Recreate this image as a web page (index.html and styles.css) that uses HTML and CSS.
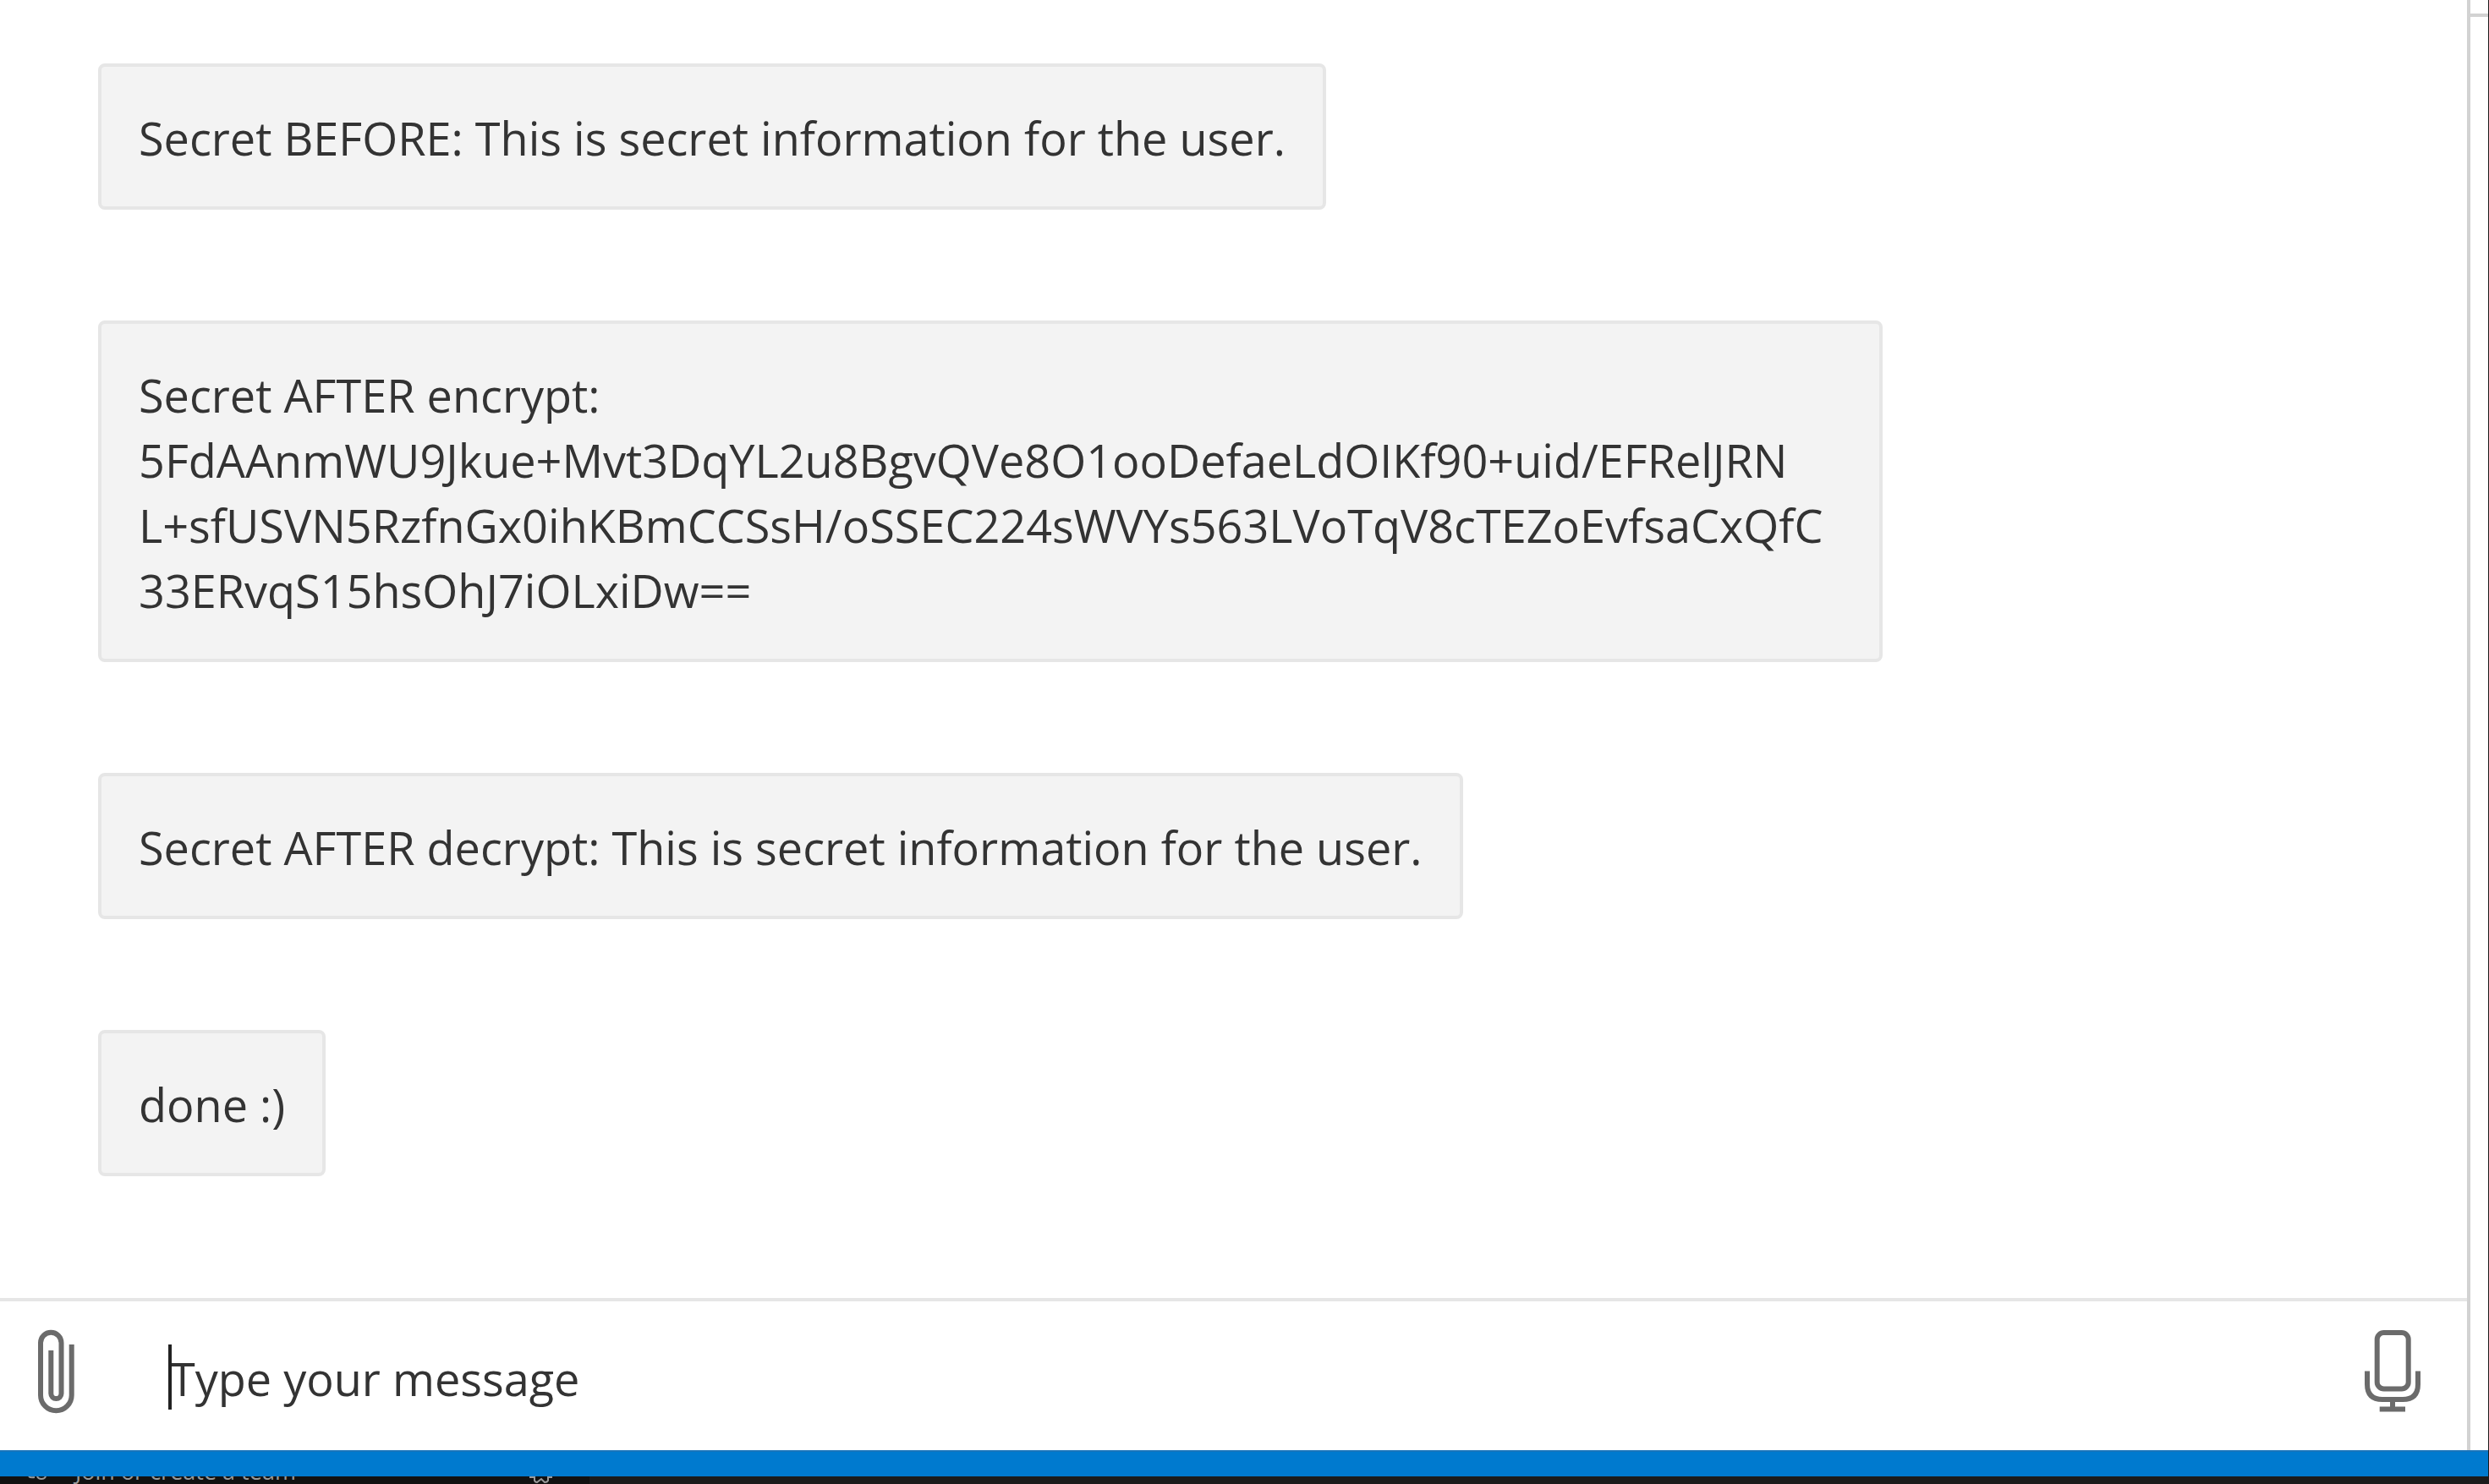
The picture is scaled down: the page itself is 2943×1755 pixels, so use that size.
FILE: index.html
```html
<!DOCTYPE html>
<html lang="en">
<head>
<meta charset="utf-8">
<title>Chat</title>
<link rel="stylesheet" href="styles.css">
</head>
<body>
<div class="app">
  <div class="workspace">
    <main class="chat">
      <section class="messages" aria-label="Messages">
        <p class="bubble">Secret BEFORE: This is secret information for the user.</p>
        <p class="bubble bubble-long">Secret AFTER encrypt:<br>5FdAAnmWU9Jkue+Mvt3DqYL2u8BgvQVe8O1ooDefaeLdOIKf90+uid/EFRelJRN<br>L+sfUSVN5RzfnGx0ihKBmCCSsH/oSSEC224sWVYs563LVoTqV8cTEZoEvfsaCxQfC<br>33ERvqS15hsOhJ7iOLxiDw==</p>
        <p class="bubble">Secret AFTER decrypt: This is secret information for the user.</p>
        <p class="bubble">done :)</p>
      </section>
      <form class="composer">
        <button class="icon-button" type="button" aria-label="Attach file">
          <svg class="icon" width="52" height="104" viewBox="0 0 52 104"><path d="M44.7 19V79A18.3 18.3 0 0 1 8 79V17A12.2 12.2 0 0 1 32.5 17V77A6.1 6.1 0 0 1 20.3 77V26"/></svg>
        </button>
        <div class="field">
          <input class="message-input" type="text" aria-label="Message" placeholder="Type your message">
          <span class="caret"></span>
        </div>
        <button class="icon-button" type="button" aria-label="Speak">
          <svg class="icon" width="76" height="104" viewBox="0 0 76 104"><rect x="19.7" y="5" width="37" height="66.5" rx="8"/><path d="M8 50.5V66Q8 84 26 84H50Q68 84 68 66V50.5M38 84V95M22.7 95.5H53"/></svg>
        </button>
      </form>
    </main>
    <aside class="side"><div class="side-head"></div></aside>
  </div>
  <div class="status"></div>
  <footer class="dock">
    <div class="team">
      <svg class="people" width="24" height="9" viewBox="0 0 24 9"><path d="M1 0Q3 2 8 1"/><path d="M11 0Q12 3 16 3Q20 3 21 0"/></svg>
      <a class="team-link" href="#">Join or create a team</a>
      <svg class="gear" width="28" height="9" viewBox="0 0 28 9"><path d="M0 1H6V5Q7 7 9 7L14 3L18 7Q21 7 22 5V1H27"/></svg>
    </div>
  </footer>
</div>
</body>
</html>
```
FILE: styles.css
```css
* { box-sizing: border-box; }

body {
  margin: 0;
  background: #1b1b1b;
  color: #333;
  font-family: "Open Sans", "Noto Sans", sans-serif;
  font-size: 54px;
  line-height: 77px;
}

.app {
  display: flex;
  flex-direction: column;
  height: 100vh;
}

.workspace {
  display: flex;
  flex: 1;
  min-height: 0;
  margin-right: 1px;
  background: #fff;
}

.chat {
  display: flex;
  flex: 1;
  flex-direction: column;
  min-width: 0;
  border-right: 4px solid #d2d2d2;
}

.messages {
  display: flex;
  flex: 1;
  flex-direction: column;
  align-items: flex-start;
  gap: 131px;
  padding: 75px 116px 0;
}

.bubble {
  margin: 0;
  padding: 46px 44px 42px;
  border: 4px solid #e6e6e6;
  border-radius: 8px;
  background: #f3f3f3;
}

.bubble-long {
  width: 100%;
  max-width: 2110px;
}

.composer {
  display: flex;
  align-items: flex-start;
  height: 180px;
  padding: 32px 50px 0 40px;
  border-top: 4px solid #e6e6e6;
}

.icon-button {
  flex: none;
  padding: 0;
  border: 0;
  background: none;
}

.icon {
  display: block;
  fill: none;
  stroke: #6b6b6b;
  stroke-width: 6;
}

.field {
  position: relative;
  flex: 1;
  margin: 19px 100px 0 107px;
}

.message-input {
  display: block;
  width: 100%;
  height: 80px;
  padding: 0 2px;
  border: 0;
  outline: 0;
  background: none;
  color: #333;
  font: inherit;
}

.message-input::placeholder {
  color: #333;
  opacity: 1;
}

.caret {
  position: absolute;
  top: 0;
  left: 0;
  width: 4px;
  height: 77px;
  background: #222;
}

.side { width: 21px; }

.side-head {
  height: 20px;
  border-bottom: 4px solid #d2d2d2;
}

.status {
  height: 31px;
  margin-right: 1px;
  border-top: 2px solid #1874bb;
  background: #007acf;
}

.dock {
  height: 9px;
  overflow: hidden;
}

.team {
  display: flex;
  align-items: flex-end;
  width: 697px;
  height: 9px;
  padding: 0 43px 0 33px;
  background: #111;
}

.people, .gear {
  flex: none;
  fill: none;
  stroke: #999;
  stroke-width: 2;
}

.team-link {
  flex: 1;
  margin-left: 32px;
  color: #999;
  font-size: 27px;
  line-height: 30px;
  text-decoration: none;
}
```
